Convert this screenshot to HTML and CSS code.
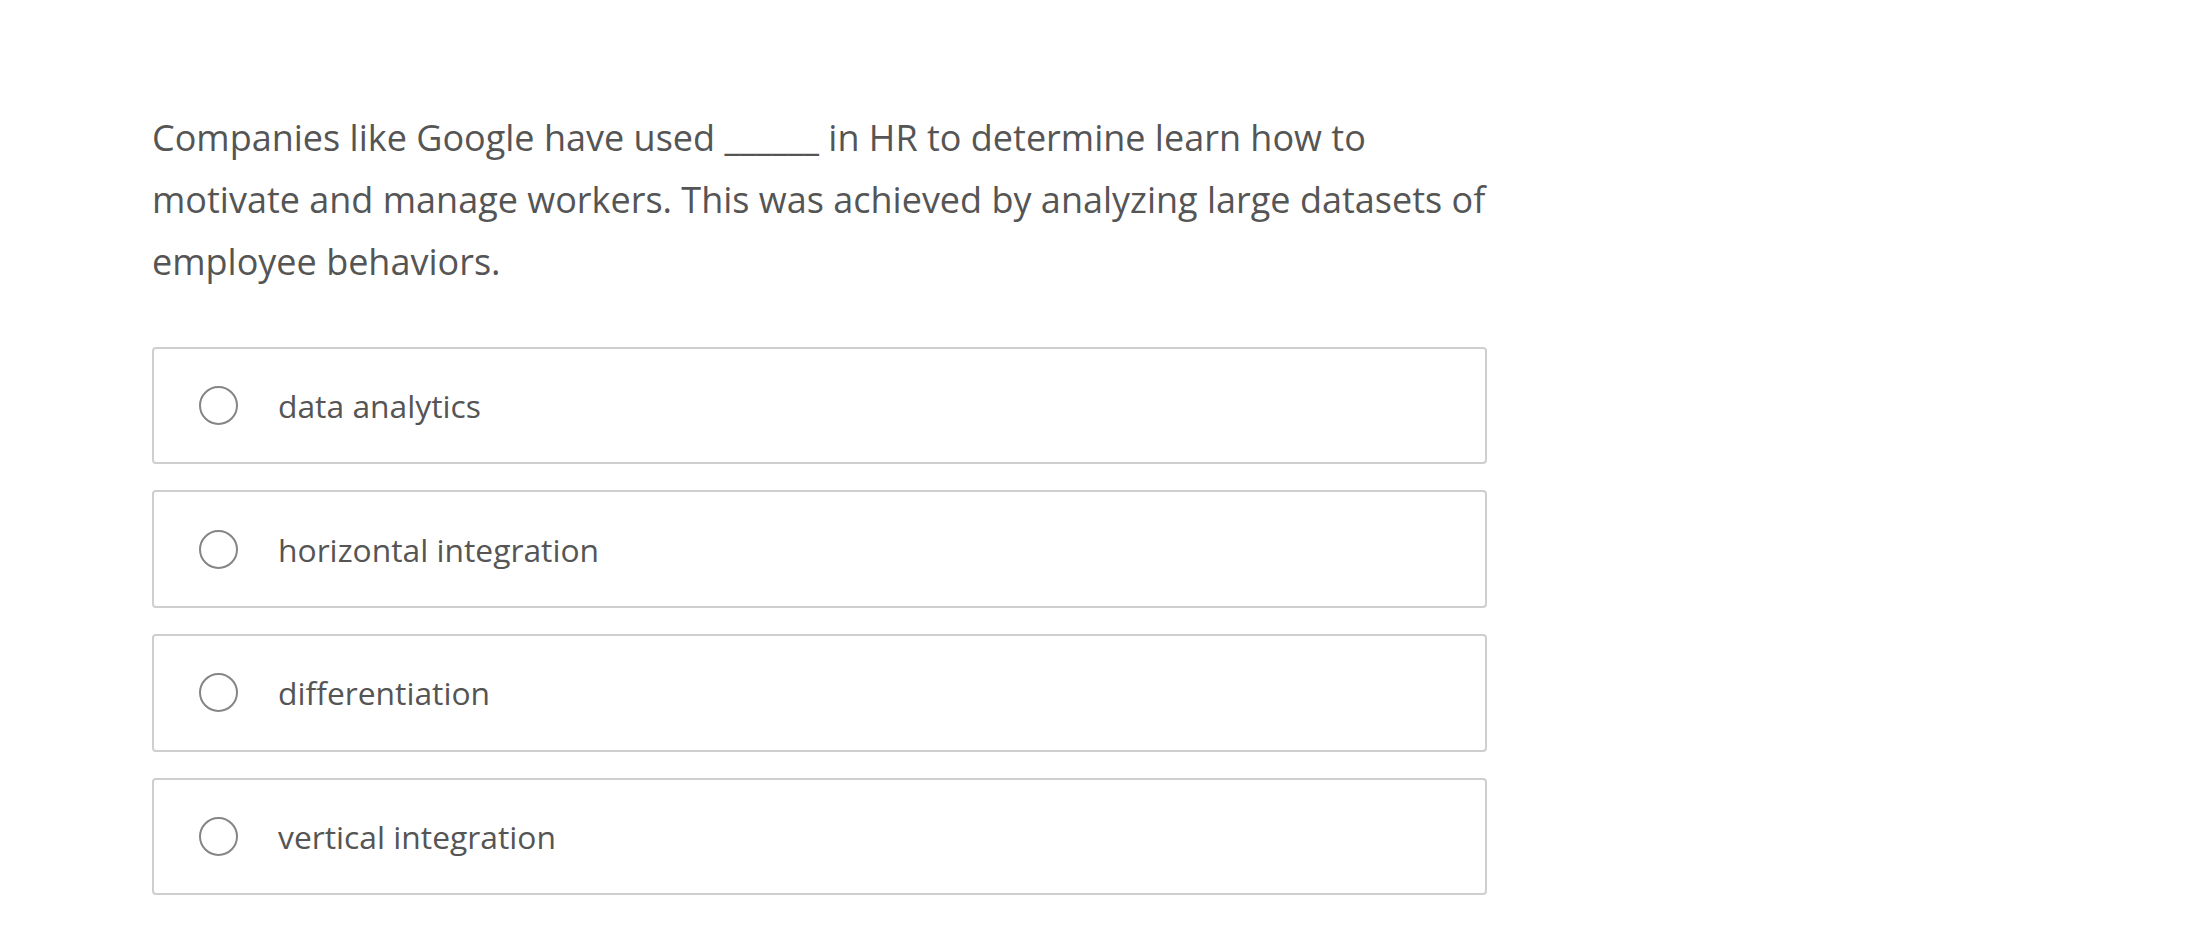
FILE: index.html
```html
<!DOCTYPE html>
<html lang="en">
<head>
<meta charset="utf-8">
<title>Question</title>
<link rel="stylesheet" href="styles.css">
</head>
<body>
<main class="quiz">
  <p class="question">Companies like Google have used ______ in HR to determine learn how to motivate and manage workers. This was achieved by analyzing large datasets of employee behaviors.</p>
  <div class="options">
    <label class="option"><span class="radio"></span><span class="label">data analytics</span></label>
    <label class="option"><span class="radio"></span><span class="label">horizontal integration</span></label>
    <label class="option"><span class="radio"></span><span class="label">differentiation</span></label>
    <label class="option"><span class="radio"></span><span class="label">vertical integration</span></label>
  </div>
</main>
</body>
</html>
```
FILE: styles.css
```css
html, body {
  margin: 0;
  padding: 0;
  background: #fff;
}
body {
  font-family: "Open Sans", "Noto Sans", sans-serif;
  color: #555;
}
.quiz {
  width: 1335px;
  padding: 107px 0 0 152px;
}
.question {
  margin: 0 0 53.5px 0;
  font-size: 36px;
  line-height: 62px;
  color: #555;
}
.options {
  display: flex;
  flex-direction: column;
  gap: 26.3px;
}
.option {
  display: flex;
  align-items: center;
  height: 113.5px;
  border: 2px solid #cfcfcf;
  border-radius: 4px;
  padding-left: 45px;
  box-sizing: content-box;
}
.radio {
  width: 35px;
  height: 35px;
  border: 2px solid #858585;
  border-radius: 50%;
  flex: none;
}
.label {
  margin-left: 40px;
  font-size: 31.8px;
  color: #555;
}
```
